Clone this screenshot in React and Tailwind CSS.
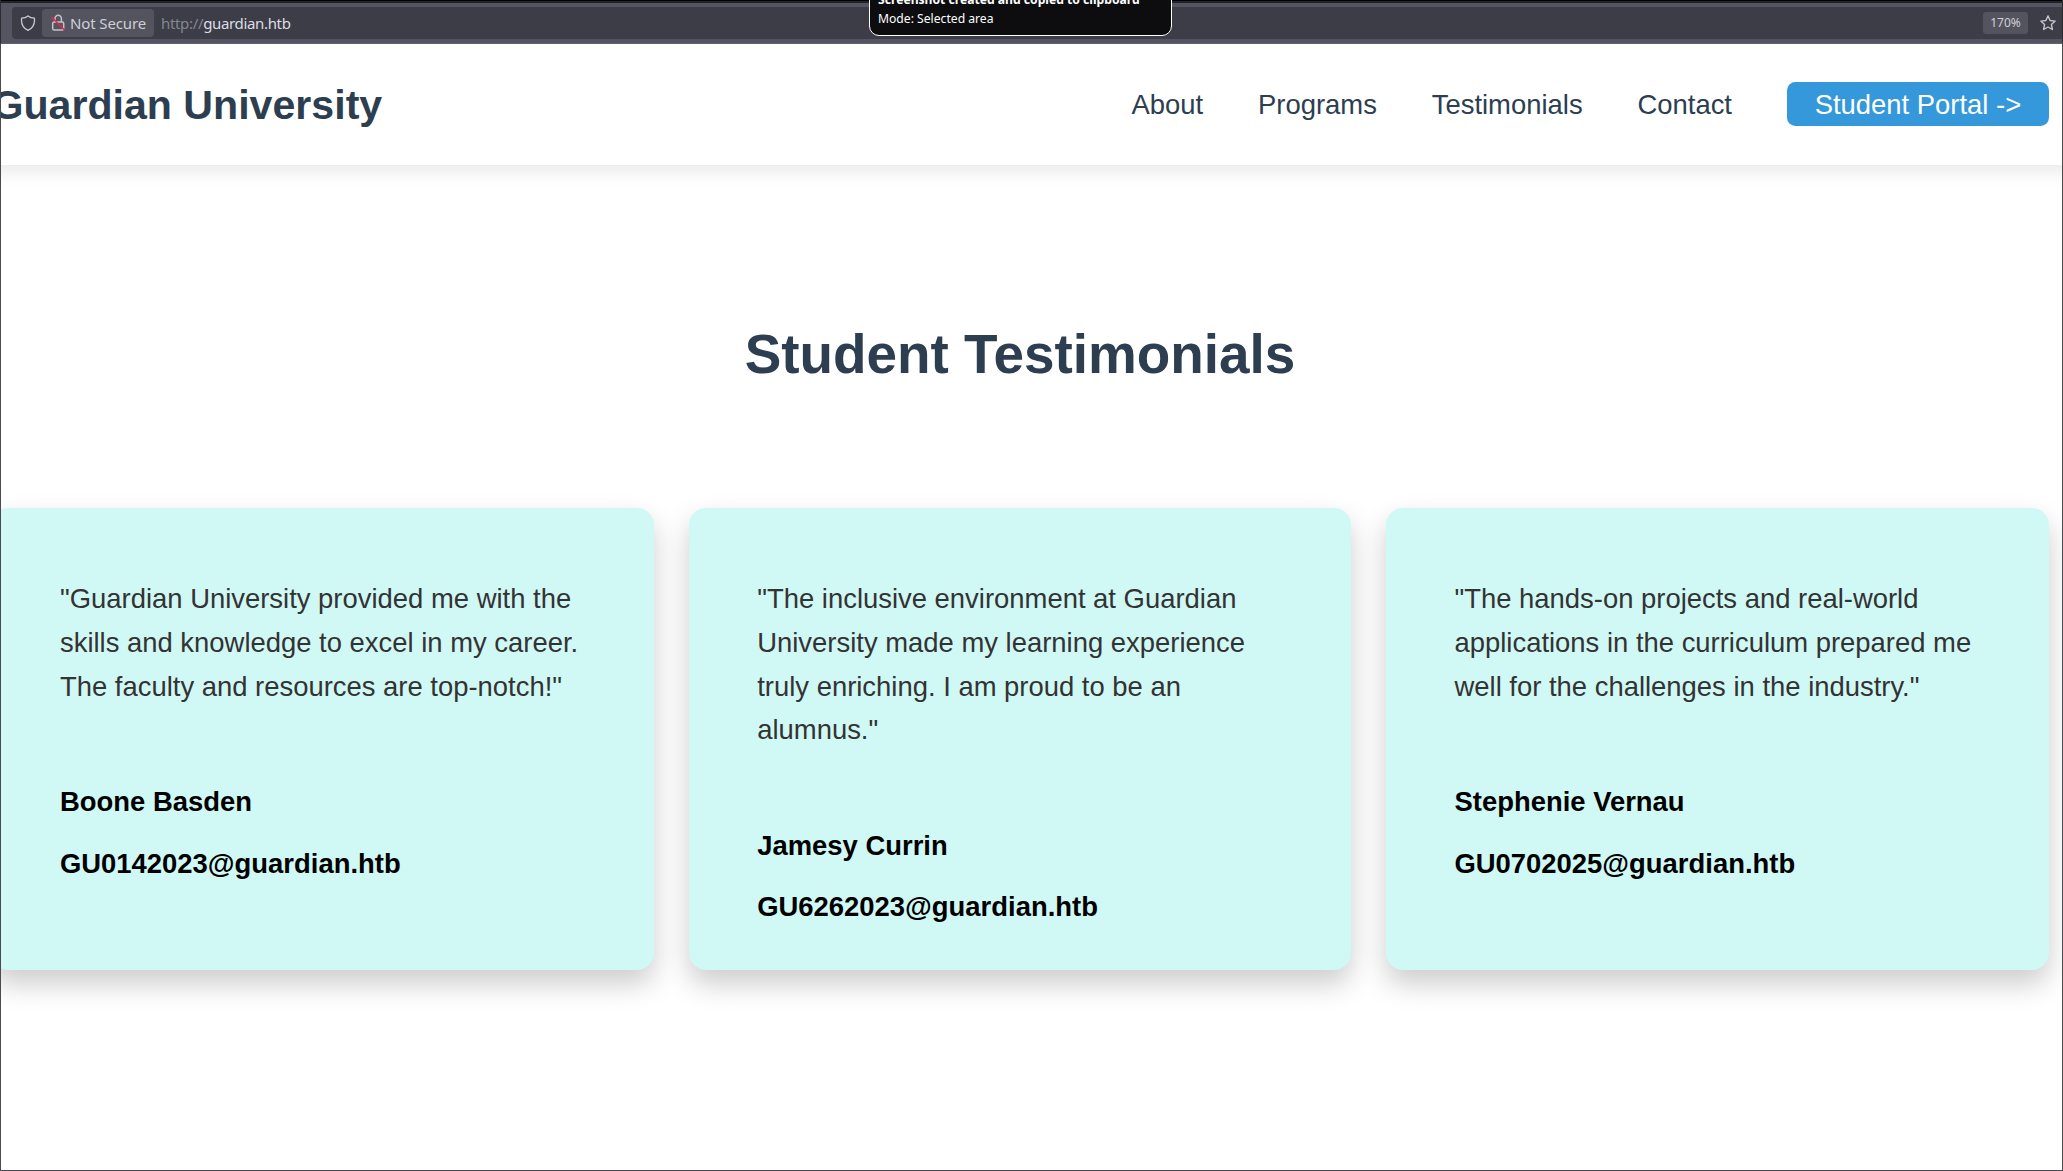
import React from 'react';

const testimonials = [
  {
    lines: ['"Guardian University provided me with the', 'skills and knowledge to excel in my career.', 'The faculty and resources are top-notch!"'],
    name: 'Boone Basden',
    email: 'GU0142023@guardian.htb',
  },
  {
    lines: ['"The inclusive environment at Guardian', 'University made my learning experience', 'truly enriching. I am proud to be an', 'alumnus."'],
    name: 'Jamesy Currin',
    email: 'GU6262023@guardian.htb',
  },
  {
    lines: ['"The hands-on projects and real-world', 'applications in the curriculum prepared me', 'well for the challenges in the industry."'],
    name: 'Stephenie Vernau',
    email: 'GU0702025@guardian.htb',
  },
];

function BrowserBar() {
  return (
    <div className="relative h-11 shrink-0 overflow-hidden border-x border-b border-x-[#2b2b30] border-b-[#5f5f6f] bg-[#555562] pt-[7px] pl-[11px] font-['Noto_Sans',sans-serif] text-[#fbfbfe]">
      <div className="absolute inset-x-0 top-0 h-[3px] border-t border-black bg-[#23222b]" />
      <div className="flex h-8 items-center rounded-l bg-[#3c3d46] pl-2">
        <svg className="mr-1.5 h-4 w-4" viewBox="0 0 16 16" fill="none" stroke="#c9c9d2" strokeWidth="1.3" strokeLinejoin="round">
          <path d="M8 .9C6.200 2.300 4 3 1.600 3.200 1 8.500 3 13 8 15.300 13 13 15 8.500 14.400 3.200 12 3 9.800 2.300 8 .9Z" />
        </svg>
        <div className="flex h-7 w-28 items-center rounded bg-[#53545d] pl-2 text-[15px] text-[#cfcfd9]">
          <svg className="mr-1 h-[18px] w-4" viewBox="0 0 16 18" fill="none" stroke="#c2c2ca" strokeWidth="1.500">
            <rect x="2.700" y="8" width="11" height="8" rx="1.500" />
            <path d="M5 8V4.500a3.200 3.200 0 0 1 6.400 0V8" />
            <path d="M1.500 3 14.500 16" stroke="#f0204a" />
          </svg>
          <span className="tracking-[-0.13px] whitespace-nowrap">Not Secure</span>
        </div>
        <div className="ml-[7px] text-[15px] tracking-[-0.34px] text-[#dcdce6]"><span className="text-[#85858e]">http://</span>guardian.htb</div>
        <div className="ml-auto flex h-[22px] w-[45px] items-center justify-center rounded-[3px] bg-[#53545d] text-xs text-[#cfcfd9]">170%</div>
        <svg className="mr-[6px] ml-3 h-4 w-4" viewBox="0 0 16 16" fill="none" stroke="#c2c2ca" strokeWidth="1.4" strokeLinejoin="round">
          <path d="m8 .9 2.100 4.600 5.100.6-3.800 3.400 1 5L8 12l-4.400 2.500 1-5L.8 6.100l5.100-.6Z" />
        </svg>
      </div>
      <div className="absolute -top-5 left-[868px] h-14 w-[303px] rounded-[10px] border border-white bg-[#0d0d0f] px-2 pt-[10px] text-[12.15px] leading-[18px] text-white">
        <p className="font-bold whitespace-nowrap">Screenshot created and copied to clipboard</p>
        <p className="pt-px">Mode: Selected area</p>
      </div>
    </div>
  );
}

function Header() {
  return (
    <header className="-mx-6 flex h-[121px] shrink-0 items-center justify-between px-6 pr-[37px] text-[#2c3e50] shadow-[0_5px_18px_rgba(0,0,0,0.1)]">
      <div className="-ml-[9.6px] pt-0.5 text-[41.14px] leading-none font-bold whitespace-nowrap">Guardian University</div>
      <nav className="flex items-center gap-[54.86px] pb-px leading-[42px]">
        <a className="pt-0.5">About</a>
        <a className="pt-0.5">Programs</a>
        <a className="pt-0.5">Testimonials</a>
        <a className="pt-0.5">Contact</a>
        <a className="rounded-[8.5px] bg-[#3498db] px-[27.8px] pt-0.5 text-white">Student Portal -&gt;</a>
      </nav>
    </header>
  );
}

function Card({ item }) {
  return (
    <article className="h-[462px] rounded-[17px] bg-[#d0f9f6] px-[68.57px] pt-[68.78px] shadow-[0_13.7px_27.4px_rgba(0,0,0,0.2)]">
      <p className="leading-[43.89px] text-[#333]">
        {item.lines.map((l) => (
          <span key={l} className="block whitespace-nowrap">{l}</span>
        ))}
      </p>
      <div className="mt-[71.62px] text-black">
        <p className="leading-[43.89px] font-bold">{item.name}</p>
        <p className="mt-[17.6px] leading-[43.89px] font-bold">{item.email}</p>
      </div>
    </article>
  );
}

export default function App() {
  return (
    <div className="flex h-[1171px] w-[2063px] flex-col overflow-hidden bg-white">
      <BrowserBar />
      <div className="flex flex-1 flex-col overflow-hidden border-x border-b border-[#4b4b4f] font-['Liberation_Sans',Arial,sans-serif] text-[27.43px]">
        <Header />
        <main>
          <h2 className="mt-[145px] pr-[23px] text-center text-[54.86px] leading-[88px] font-bold text-[#2c3e50]">Student Testimonials</h2>
          <div className="mt-[110px] -ml-[9.6px] grid w-[2057.2px] grid-cols-3 gap-[34.6px]">
            {testimonials.map((t) => <Card key={t.name} item={t} />)}
          </div>
        </main>
      </div>
    </div>
  );
}
